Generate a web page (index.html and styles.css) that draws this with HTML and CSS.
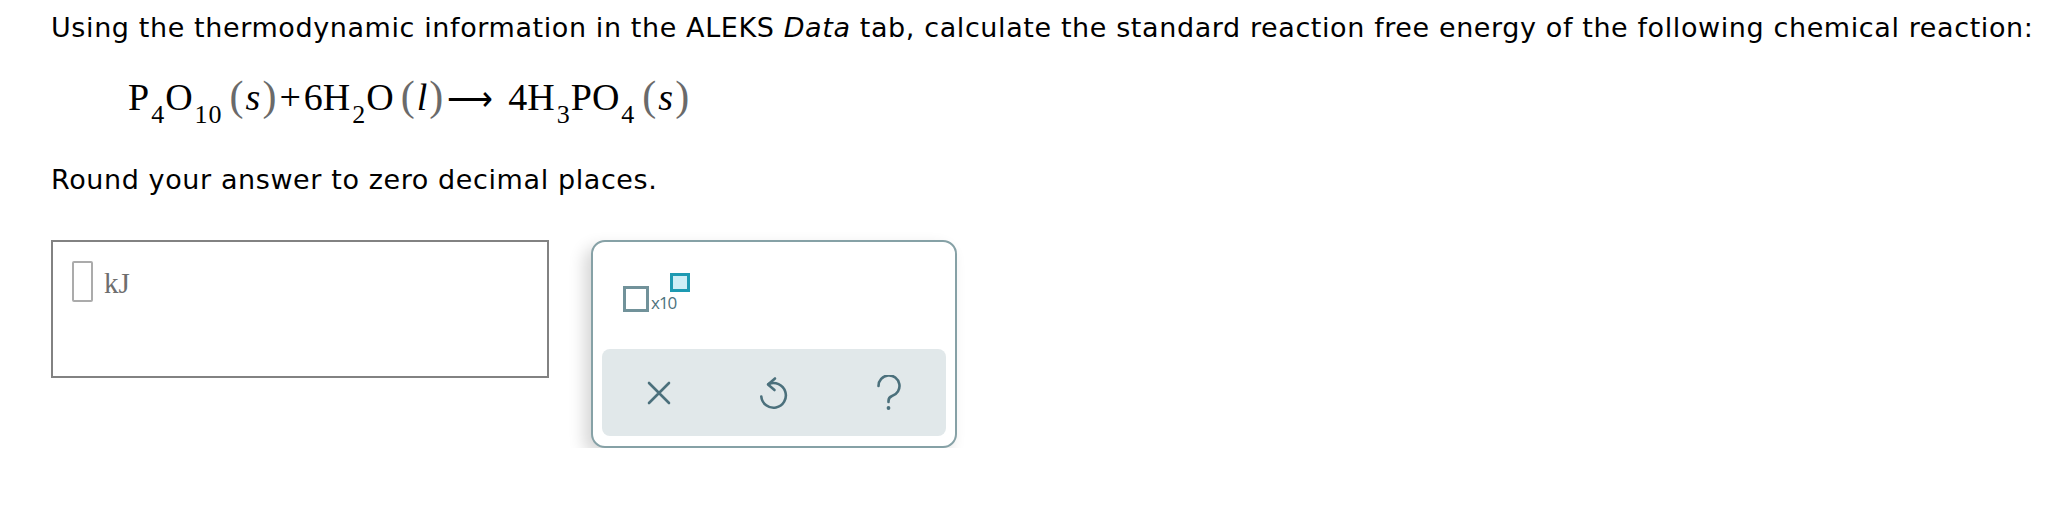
FILE: index.html
```html
<!DOCTYPE html>
<html lang="en">
<head>
<meta charset="utf-8">
<title>ALEKS question</title>
<link rel="stylesheet" href="styles.css">
</head>
<body>
<div class="page">
  <p class="line first">Using the thermodynamic information in the ALEKS <i>Data</i> tab, calculate the standard reaction free energy of the following chemical reaction:</p>
  <div class="eq">P<sub>4</sub>O<sub>10</sub><span class="ph"><span class="par">(</span><i>s</i><span class="par">)</span></span><span class="op">+</span>6H<sub>2</sub>O<span class="ph"><span class="par">(</span><i>l</i><span class="par">)</span></span><span class="arrow">&#10230;</span>4H<sub>3</sub>PO<sub>4</sub><span class="ph"><span class="par">(</span><i>s</i><span class="par">)</span></span></div>
  <p class="line round">Round your answer to zero decimal places.</p>
  <div class="answer-row">
    <div class="answer-box">
      <span class="slot"></span>
      <span class="unit">kJ</span>
    </div>
    <div class="palette">
      <div class="palette-top">
        <div class="sci">
          <span class="sci-base"></span>
          <span class="sci-x">x10</span>
          <span class="sci-exp"></span>
        </div>
      </div>
      <div class="toolbar">
        <button class="tool" aria-label="Clear">
          <svg viewBox="0 0 24 24" width="24" height="24"><path d="M2 2 L22 22 M22 2 L2 22" fill="none" stroke="currentColor" stroke-width="2.6" stroke-linecap="round"/></svg>
        </button>
        <button class="tool" aria-label="Undo">
          <svg viewBox="0 0 30 34" width="30" height="34"><path d="M9.5 8.2 A12.3 12.3 0 1 1 2.3 20.5" fill="none" stroke="currentColor" stroke-width="2.6" stroke-linecap="round"/><path d="M16 2.5 L9 8.5 L15.5 14" fill="none" stroke="currentColor" stroke-width="2.6" stroke-linecap="round" stroke-linejoin="round"/></svg>
        </button>
        <button class="tool" aria-label="Help">
          <svg viewBox="0 0 26 36" width="26" height="36"><path d="M2.5 11 A10.5 10.5 0 1 1 16 21 C13.3 22 12.5 23.5 12.5 26 L12.5 27" fill="none" stroke="currentColor" stroke-width="2.6" stroke-linecap="round"/><circle cx="12.5" cy="33" r="1.9" fill="currentColor"/></svg>
        </button>
      </div>
    </div>
  </div>
</div>
</body>
</html>
```
FILE: styles.css
```css
html, body {
  margin: 0;
  padding: 0;
  background: #ffffff;
}

.page {
  padding: 10px 0 0 51px;
  font-family: "DejaVu Sans", Verdana, sans-serif;
  font-size: 27px;
  letter-spacing: 0.6px;
  color: #000000;
}

.line {
  margin: 0;
  line-height: 36px;
  white-space: nowrap;
}

.eq {
  margin: 26px 0 0 77px;
  font-family: "Liberation Serif", "Times New Roman", serif;
  font-size: 38px;
  line-height: 50px;
  height: 50px;
  letter-spacing: 0;
  white-space: nowrap;
}

.eq sub {
  font-size: 26px;
  line-height: 0;
  vertical-align: -13px;
  margin-left: 2px;
  letter-spacing: 1px;
}

.ph {
  margin-left: 7px;
}

.par {
  color: #6a6a6a;
  font-size: 42px;
  line-height: 0;
}

.ph i {
  margin: 0 2px;
}

.op {
  margin: 0 3px;
}

.arrow {
  margin: 0 15px 0 4px;
  font-size: 32px;
}

.round {
  margin-top: 40px;
}

.answer-row {
  display: flex;
  align-items: flex-start;
  gap: 42px;
  margin-top: 42px;
}

.answer-box {
  box-sizing: border-box;
  width: 498px;
  height: 138px;
  border: 2px solid #828282;
  padding: 19px;
  display: flex;
  align-items: flex-start;
}

.slot {
  box-sizing: border-box;
  width: 21px;
  height: 41px;
  border: 2px solid #ababab;
  border-radius: 2px;
}

.unit {
  margin: 8px 0 0 11px;
  font-family: "Liberation Serif", "Times New Roman", serif;
  font-size: 29px;
  line-height: 28px;
  letter-spacing: 0;
  color: #6e6e6e;
}

.palette {
  box-sizing: border-box;
  width: 366px;
  height: 208px;
  border: 2px solid #86a1a6;
  border-radius: 14px;
  background: #ffffff;
  box-shadow: -7px 7px 16px rgba(0, 0, 0, 0.16);
  padding: 0 9px 10px;
  display: flex;
  flex-direction: column;
}

.palette-top {
  height: 107px;
  position: relative;
}

.sci {
  position: relative;
  margin: 44px 0 0 21px;
  width: 80px;
  height: 30px;
}

.sci-base {
  position: absolute;
  left: 0;
  top: 0;
  box-sizing: border-box;
  width: 26px;
  height: 26px;
  border: 3px solid #71929a;
}

.sci-x {
  position: absolute;
  left: 28px;
  top: 8px;
  font-family: "Open Sans", "Liberation Sans", sans-serif;
  font-size: 17px;
  font-weight: 500;
  line-height: 17px;
  letter-spacing: -1px;
  color: #4d727d;
}

.sci-exp {
  position: absolute;
  left: 47px;
  top: -13px;
  box-sizing: border-box;
  width: 20px;
  height: 19px;
  border: 3px solid #1d9ab2;
  background: #cdeef6;
}

.toolbar {
  flex: 1;
  background: #e1e8ea;
  border-radius: 8px;
  display: grid;
  grid-template-columns: 1fr 1fr 1fr;
}

.tool {
  border: 0;
  background: transparent;
  padding: 0;
  margin: 0;
  color: #4b707c;
  display: flex;
  align-items: center;
  justify-content: center;
}

.tool svg {
  display: block;
}
```
